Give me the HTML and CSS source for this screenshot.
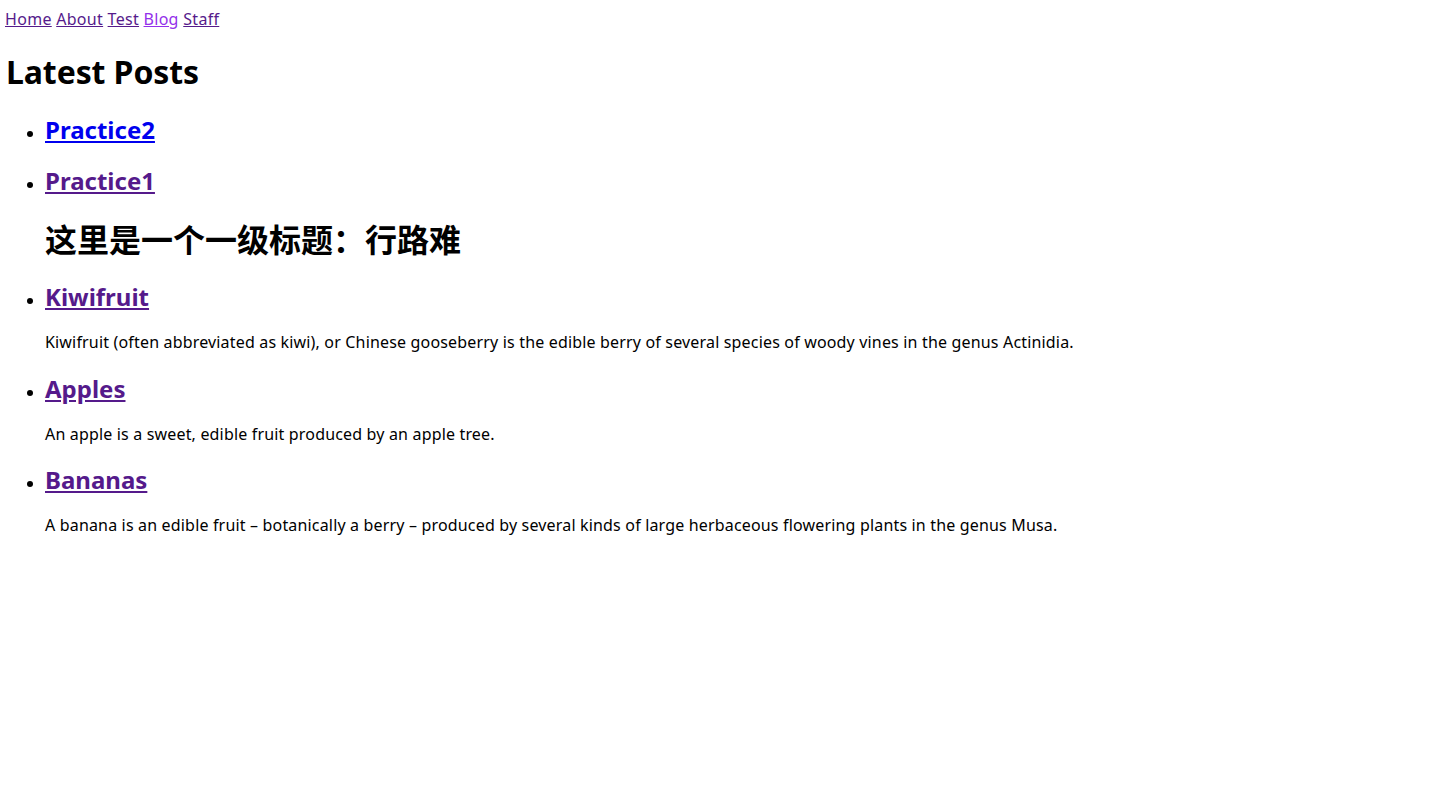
FILE: index.html
```html
<!DOCTYPE html>
<html lang="zh-CN">
<head>
<meta charset="utf-8">
<title>Latest Posts</title>
<link rel="stylesheet" href="styles.css">
</head>
<body>
<nav class="nav">
  <a class="nav-link" href="#home">Home</a>
  <a class="nav-link" href="#about">About</a>
  <a class="nav-link" href="#test">Test</a>
  <a class="nav-link nav-link-active" href="#blog">Blog</a>
  <a class="nav-link" href="#staff">Staff</a>
</nav>
<h1 class="page-title">Latest Posts</h1>
<ul class="post-list">
  <li class="post">
    <h2 class="post-title"><a class="post-link post-link-new" href="#practice2">Practice2</a></h2>
  </li>
  <li class="post">
    <h2 class="post-title"><a class="post-link" href="#practice1">Practice1</a></h2>
    <h1 class="post-heading">这里是一个一级标题：行路难</h1>
  </li>
  <li class="post">
    <h2 class="post-title"><a class="post-link" href="#kiwifruit">Kiwifruit</a></h2>
    <p class="post-summary">Kiwifruit (often abbreviated as kiwi), or Chinese gooseberry is the edible berry of several species of woody vines in the genus Actinidia.</p>
  </li>
  <li class="post">
    <h2 class="post-title"><a class="post-link" href="#apples">Apples</a></h2>
    <p class="post-summary">An apple is a sweet, edible fruit produced by an apple tree.</p>
  </li>
  <li class="post">
    <h2 class="post-title"><a class="post-link" href="#bananas">Bananas</a></h2>
    <p class="post-summary">A banana is an edible fruit – botanically a berry – produced by several kinds of large herbaceous flowering plants in the genus Musa.</p>
  </li>
</ul>
</body>
</html>
```
FILE: styles.css
```css
body {
  margin: 9px 5px 8px;
  font-family: "Noto Sans", "Noto Sans CJK SC", sans-serif;
  font-size: 16px;
  line-height: 1.3;
  color: #000;
  background: #fff;
}

.nav {
  letter-spacing: 0.3px;
}

.nav-link {
  color: #551a8b;
  text-decoration: underline;
}

.nav-link-active {
  color: #9330ea;
}

.page-title {
  font-size: 32px;
  font-weight: 700;
  margin: 21.4px 0 21.4px 1px;
  letter-spacing: -0.1px;
}

.post-list {
  margin: 16px 0;
  padding-left: 40px;
  list-style: disc;
}

.post-title {
  font-size: 24px;
  font-weight: 700;
  margin: 19.9px 0;
}

.post-link {
  color: #551a8b;
  text-decoration: underline;
}

.post-link-new {
  color: #0000ee;
}

.post-heading {
  font-size: 32px;
  font-weight: 700;
  margin: 21.4px 0;
  font-family: "Noto Sans CJK SC", sans-serif;
}

.post-summary {
  margin: 16px 0;
  letter-spacing: 0.17px;
}
```
